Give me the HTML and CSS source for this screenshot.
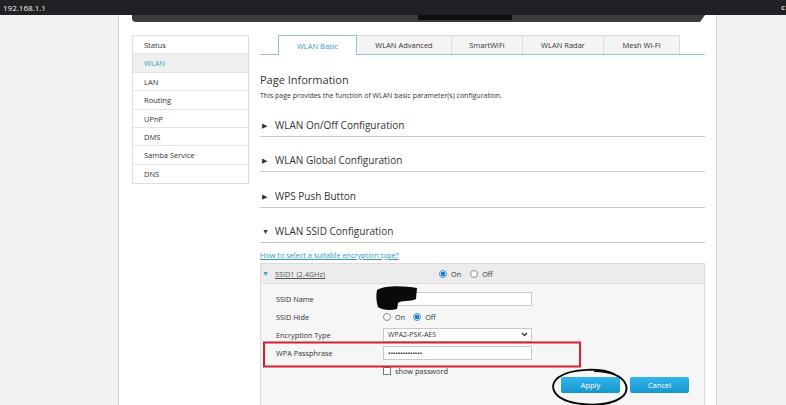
FILE: index.html
```html
<!DOCTYPE html>
<html>
<head>
<meta charset="utf-8">
<link rel="stylesheet" href="styles.css">
</head>
<body>
<div class="topbar"><span class="url">192.168.1.1</span><span class="edge">C</span></div>
<div class="page">
  <div class="gutter left"></div>
  <div class="center">
    <div class="strip"><div class="dark"></div></div>
    <div class="main">
      <nav class="menu">
        <div class="item">Status</div>
        <div class="item active">WLAN</div>
        <div class="item">LAN</div>
        <div class="item">Routing</div>
        <div class="item">UPnP</div>
        <div class="item">DMS</div>
        <div class="item">Samba Service</div>
        <div class="item last">DNS</div>
      </nav>
      <div class="content">
        <div class="tabs">
          <div class="tab active w1">WLAN Basic</div>
          <div class="tab w2">WLAN Advanced</div>
          <div class="tab w3">SmartWiFi</div>
          <div class="tab w4">WLAN Radar</div>
          <div class="tab w5">Mesh Wi-Fi</div>
        </div>
        <h1 class="title">Page Information</h1>
        <p class="desc">This page provides the function of WLAN basic parameter(s) configuration.</p>
        <div class="sec"><span class="tri">&#9654;</span>WLAN On/Off Configuration</div>
        <div class="sec"><span class="tri">&#9654;</span>WLAN Global Configuration</div>
        <div class="sec"><span class="tri">&#9654;</span>WPS Push Button</div>
        <div class="sec"><span class="tri">&#9660;</span>WLAN SSID Configuration</div>
        <a class="help">How to select a suitable encryption type?</a>
        <div class="ssid">
          <div class="ssid-head">
            <span class="btri">&#9660;</span><span class="ssid-name">SSID1 (2.4GHz)</span>
            <span class="radio on"></span><span class="rtext">On</span>
            <span class="radio"></span><span class="rtext">Off</span>
          </div>
          <div class="ssid-body">
            <div class="row"><span class="label">SSID Name</span><span class="field"></span></div>
            <div class="row"><span class="label">SSID Hide</span>
              <span class="radio"></span><span class="rtext">On</span>
              <span class="radio on"></span><span class="rtext">Off</span>
            </div>
            <div class="row"><span class="label">Encryption Type</span><span class="field select"><span>WPA2-PSK-AES</span><svg class="chev" width="7" height="5" viewBox="0 0 7 5"><polyline points="1,1 3.5,3.5 6,1" fill="none" stroke="#333" stroke-width="1.3"/></svg></span></div>
            <div class="row"><span class="label">WPA Passphrase</span><span class="field"><span class="dots">&#8226;&#8226;&#8226;&#8226;&#8226;&#8226;&#8226;&#8226;&#8226;&#8226;&#8226;&#8226;&#8226;&#8226;</span></span></div>
            <div class="row"><span class="label"></span><span class="check"></span><span class="rtext">show password</span></div>
            <div class="buttons"><span class="btn">Apply</span><span class="btn">Cancel</span></div>
          </div>
        </div>
      </div>
    </div>
  </div>
  <div class="gutter right"></div>
</div>
<svg class="annot" width="786" height="405" viewBox="0 0 786 405">
  <path d="M377 290 C386 285, 404 286, 417 288 L416 299 C410 302, 402 300, 398 303 L397 309 C390 311, 382 310, 378 307 C376 301, 376 295, 377 290 Z" fill="#0a0a0a"/>
  <rect x="264" y="342.5" width="316" height="24" fill="none" stroke="#d3222e" stroke-width="2"/>
  <path d="M614 374 C602 368, 572 368, 559 377 C547 386, 553 401, 582 404 C610 407, 630 398, 626 385 C623 376, 610 371, 594 371" fill="none" stroke="#0a0a0a" stroke-width="2"/>
</svg>
</body>
</html>
```
FILE: styles.css
```css
body {
  margin: 0;
  width: 786px;
  height: 405px;
  overflow: hidden;
  position: relative;
  font-family: "Open Sans", "Noto Sans", sans-serif;
  color: #333;
  background: #f2f2f2;
}

.topbar {
  height: 15px;
  background: #202124;
  display: flex;
  justify-content: space-between;
  align-items: center;
  color: #f2f2f2;
  font-size: 8px;
  padding-left: 3px;
  overflow: hidden;
}

.edge {
  font-size: 6px;
  font-weight: bold;
  margin-right: 1px;
}

.page {
  display: flex;
  height: 390px;
}

.gutter.left {
  width: 118px;
  border-right: 1px solid #cfcfcf;
  background: #f2f2f2;
}

.gutter.right {
  flex: 1;
  border-left: 1px solid #d6d6d6;
  background: #f2f2f2;
}

.center {
  width: 597px;
  background: #fff;
  display: flex;
  flex-direction: column;
}

.strip {
  margin-left: 13px;
  width: 573px;
  height: 7px;
  background: #3b3b3b;
  border-bottom-left-radius: 4px;
  clip-path: polygon(0 0, 100% 0, calc(100% - 5px) 100%, 0 100%);
}

.strip .dark {
  margin-left: 286px;
  width: 94px;
  height: 5px;
  background: #0e0e0e;
}

.main {
  display: flex;
  margin-top: 13px;
  padding-left: 13px;
  gap: 11px;
  flex: 1;
}

.menu {
  width: 117px;
  box-sizing: border-box;
  border: 1px solid #dedede;
  align-self: flex-start;
}

.item {
  height: 18.4px;
  line-height: 18px;
  box-sizing: border-box;
  border-bottom: 1px solid #e4e4e4;
  padding-left: 11px;
  font-size: 7.5px;
}

.item.last {
  border-bottom: none;
}

.item.active {
  background: #f0f0f0;
  color: #3d9cbb;
}

.content {
  width: 445px;
  display: flex;
  flex-direction: column;
}

.tabs {
  display: flex;
  align-items: flex-start;
  height: 20px;
  box-sizing: border-box;
  border-bottom: 1px solid #8ec5d3;
  padding-left: 18px;
}

.tab {
  height: 19px;
  box-sizing: border-box;
  border: 1px solid #dcdcdc;
  border-bottom: none;
  border-left: none;
  background: #f4f4f4;
  font-size: 7.5px;
  display: flex;
  align-items: center;
  justify-content: center;
}

.tab.active {
  height: 20px;
  background: #fff;
  border: 1px solid #8ec5d3;
  border-bottom: none;
  color: #3d9cbb;
}

.w1 { width: 79px; }
.w2 { width: 95px; }
.w3 { width: 71px; }
.w4 { width: 81px; }
.w5 { width: 76px; }

.title {
  font-size: 11px;
  font-weight: normal;
  margin: 17px 0 0;
  line-height: 16px;
}

.desc {
  font-size: 7px;
  margin: 2px 0 0;
  line-height: 12px;
}

.sec {
  height: 22px;
  line-height: 22px;
  border-bottom: 1px solid #c9c9c9;
  margin-top: 12.2px;
  font-size: 10px;
  padding-left: 2px;
}

.tri {
  display: inline-block;
  width: 13px;
  font-size: 7px;
  vertical-align: 1px;
}

.help {
  margin-top: 6px;
  line-height: 12px;
  font-size: 7.3px;
  color: #2e9ab8;
  text-decoration: underline;
  align-self: flex-start;
}

.ssid {
  margin-top: 2.5px;
  border: 1px solid #dcdcdc;
  border-bottom: none;
  flex: 1;
  display: flex;
  flex-direction: column;
}

.ssid-head {
  height: 20px;
  box-sizing: border-box;
  background: #ececec;
  border-bottom: 1px solid #dedede;
  display: flex;
  align-items: center;
  padding-left: 1px;
  font-size: 7.3px;
}

.btri {
  width: 13px;
  font-size: 7px;
  color: #3a9fd5;
}

.ssid-name {
  width: 164px;
  color: #555;
  text-decoration: underline;
}

.ssid-body {
  flex: 1;
  background: #f6f6f6;
  padding-top: 5.5px;
}

.row {
  display: flex;
  align-items: center;
  height: 18px;
  padding-left: 15px;
  font-size: 7.3px;
}

.label {
  width: 107px;
  flex-shrink: 0;
}

.field {
  width: 149px;
  height: 14px;
  box-sizing: border-box;
  border: 1px solid #c9c9c9;
  background: #fff;
  display: flex;
  align-items: center;
  padding-left: 4px;
}

.select {
  justify-content: space-between;
  padding-right: 3px;
  font-size: 7px;
}

.dots {
  font-size: 7.5px;
  letter-spacing: -0.4px;
  line-height: 10px;
}

.radio {
  width: 8px;
  height: 8px;
  box-sizing: border-box;
  border: 1px solid #8a8a8a;
  border-radius: 50%;
  background: #fff;
  margin-right: 4px;
}

.radio.on {
  border-color: #3c8fd8;
  background: radial-gradient(circle, #1f7fd8 0 2.2px, #fff 2.6px);
}

.rtext {
  margin-right: 8px;
}

.ssid-head .rtext {
  margin-right: 9px;
}

.check {
  width: 8px;
  height: 8px;
  box-sizing: border-box;
  border: 1px solid #7a7a7a;
  background: #fff;
  margin-right: 4px;
}

.buttons {
  display: flex;
  justify-content: flex-end;
  gap: 10px;
  padding-right: 15px;
  margin-top: -2.5px;
}

.btn {
  width: 59px;
  height: 16px;
  border-radius: 2px;
  background: linear-gradient(#33b6ea, #1596cf);
  color: #fff;
  font-size: 7.5px;
  display: flex;
  align-items: center;
  justify-content: center;
}

.annot {
  position: absolute;
  left: 0;
  top: 0;
  pointer-events: none;
}
```
